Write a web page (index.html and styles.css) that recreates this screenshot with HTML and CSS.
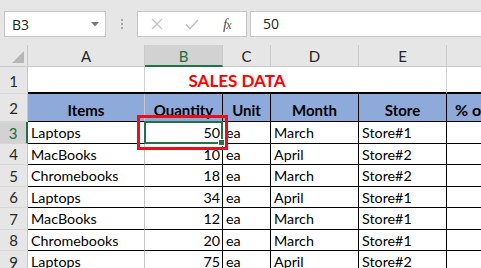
FILE: index.html
```html
<!DOCTYPE html>
<html>
<head>
<meta charset="utf-8">
<link rel="stylesheet" href="styles.css">
</head>
<body>
<div class="app">
  <div class="toolbar">
    <div class="namebox">
      <span class="nb-text">B3</span>
      <svg class="caret" width="8" height="5" viewBox="0 0 8 5"><path d="M0 0H8L4 4.5Z" fill="#7a7a7a"/></svg>
    </div>
    <div class="grip"><i></i><i></i><i></i></div>
    <div class="fbtns">
      <svg class="btn-x" width="12" height="12" viewBox="0 0 12 12"><path d="M1 1L11 11M11 1L1 11" stroke="#c3c3c3" stroke-width="1.4" fill="none"/></svg>
      <svg class="btn-ok" width="14" height="11" viewBox="0 0 14 11"><path d="M1 5.5L5 9.5L13 1" stroke="#c3c3c3" stroke-width="1.6" fill="none"/></svg>
      <span class="fx">f<span class="fx-x">x</span></span>
    </div>
    <div class="finput">50</div>
  </div>

  <div class="sheet">
    <div class="corner"><span class="tri"></span></div>
    <div class="ch">A</div>
    <div class="ch sel">B</div>
    <div class="ch">C</div>
    <div class="ch">D</div>
    <div class="ch">E</div>
    <div class="ch last"></div>

    <div class="rh">1</div>
    <div class="c r1 title-row">SALES DATA</div>
    <div class="c r1 f"></div>

    <div class="rh tall">2</div>
    <div class="c hd soft">Items</div>
    <div class="c hd">Quantity</div>
    <div class="c hd">Unit</div>
    <div class="c hd">Month</div>
    <div class="c hd">Store</div>
    <div class="c hd f clip">% of Total</div>

    <div class="rh rsel">3</div>
    <div class="c d soft">Laptops</div>
    <div class="c d num">50</div>
    <div class="c d">ea</div>
    <div class="c d">March</div>
    <div class="c d">Store#1</div>
    <div class="c d f"></div>

    <div class="rh">4</div>
    <div class="c d soft">MacBooks</div>
    <div class="c d num">10</div>
    <div class="c d">ea</div>
    <div class="c d">April</div>
    <div class="c d">Store#2</div>
    <div class="c d f"></div>

    <div class="rh">5</div>
    <div class="c d soft">Chromebooks</div>
    <div class="c d num">18</div>
    <div class="c d">ea</div>
    <div class="c d">March</div>
    <div class="c d">Store#2</div>
    <div class="c d f"></div>

    <div class="rh">6</div>
    <div class="c d soft">Laptops</div>
    <div class="c d num">34</div>
    <div class="c d">ea</div>
    <div class="c d">April</div>
    <div class="c d">Store#1</div>
    <div class="c d f"></div>

    <div class="rh">7</div>
    <div class="c d soft">MacBooks</div>
    <div class="c d num">12</div>
    <div class="c d">ea</div>
    <div class="c d">March</div>
    <div class="c d">Store#1</div>
    <div class="c d f"></div>

    <div class="rh">8</div>
    <div class="c d soft">Chromebooks</div>
    <div class="c d num">20</div>
    <div class="c d">ea</div>
    <div class="c d">March</div>
    <div class="c d">Store#1</div>
    <div class="c d f"></div>

    <div class="rh">9</div>
    <div class="c d soft">Laptops</div>
    <div class="c d num">75</div>
    <div class="c d">ea</div>
    <div class="c d">April</div>
    <div class="c d">Store#2</div>
    <div class="c d f"></div>

    <div class="selbox"><span class="handle"></span></div>
    <div class="redbox"></div>
  </div>
</div>
</body>
</html>
```

FILE: styles.css
```css
html, body {
  margin: 0;
  padding: 0;
  background: #ffffff;
}
.app {
  width: 481px;
  height: 268px;
  overflow: hidden;
  position: relative;
  font-family: "Lato", "Open Sans", sans-serif;
}

/* ---------- formula bar ---------- */
.toolbar {
  height: 45px;
  box-sizing: border-box;
  background: #e6e6e6;
  display: flex;
  align-items: flex-start;
  padding: 11px 0 0 4px;
}
.namebox {
  width: 102px;
  height: 26px;
  box-sizing: border-box;
  border: 1px solid #c6c6c6;
  background: #fff;
  display: flex;
  align-items: center;
  justify-content: space-between;
  padding: 0 6px 0 7px;
  font-family: "Open Sans", sans-serif;
  font-size: 14px;
  color: #222;
}
.caret { margin-top: 1px; }
.grip {
  width: 31px;
  height: 26px;
  display: flex;
  flex-direction: column;
  align-items: center;
  justify-content: center;
  gap: 2px;
}
.grip i {
  width: 2px;
  height: 2px;
  background: #a8a8a8;
}
.fbtns {
  width: 110px;
  height: 26px;
  box-sizing: border-box;
  border: 1px solid #c6c6c6;
  background: #fff;
  display: flex;
  align-items: center;
  padding-left: 13px;
}
.btn-x { margin-right: 22px; }
.btn-ok { margin-right: 24px; }
.fx {
  font-family: "Liberation Serif", serif;
  font-style: italic;
  font-size: 15px;
  color: #555;
  letter-spacing: -1px;
}
.fx-x { font-size: 12px; }
.finput {
  margin-left: 3px;
  flex: 1;
  height: 26px;
  box-sizing: border-box;
  border: 1px solid #c6c6c6;
  border-right: none;
  background: #fff;
  padding-left: 12px;
  font-family: "Open Sans", sans-serif;
  font-size: 14px;
  line-height: 24px;
  color: #222;
}

/* ---------- sheet grid ---------- */
.sheet {
  position: relative;
  display: grid;
  grid-template-columns: 28px 117px 78px 48px 88px 88px 60px;
  grid-template-rows: 22px 27px 28px repeat(7, 21.5px);
  font-size: 14.3px;
  color: #000;
}
.corner {
  background: #e6e6e6;
  border-right: 1px solid #c9c9c9;
  border-bottom: 1px solid #c9c9c9;
  box-sizing: border-box;
  position: relative;
}
.tri {
  position: absolute;
  right: 3px;
  bottom: 3px;
  width: 0;
  height: 0;
  border-left: 12px solid transparent;
  border-bottom: 12px solid #b7b7b7;
}
.ch {
  background: #e6e6e6;
  border-right: 1px solid #c9c9c9;
  border-bottom: 1px solid #c9c9c9;
  box-sizing: border-box;
  display: flex;
  align-items: center;
  justify-content: center;
  color: #262626;
  font-size: 15px;
  padding-top: 1px;
}
.ch.sel {
  background: #d2d2d2;
  color: #1e6b42;
  border-bottom: 2px solid #217346;
}
.ch.last { border-right: none; }
.rh {
  background: #e6e6e6;
  border-right: 1px solid #c9c9c9;
  border-bottom: 1px solid #d6d6d6;
  box-sizing: border-box;
  display: flex;
  align-items: center;
  justify-content: center;
  color: #262626;
  font-size: 15px;
  padding-top: 1px;
}
.rh.rsel {
  background: #d2d2d2;
  color: #1e6b42;
  border-right: 2px solid #217346;
}
.c {
  box-sizing: border-box;
  display: flex;
  align-items: center;
  padding: 1px 3px 0 3px;
  white-space: nowrap;
  overflow: hidden;
}
.r1 {
  border-bottom: 2px solid #000;
}
.title-row {
  grid-column: 2 / span 5;
  justify-content: center;
  color: #ff0000;
  font-weight: 700;
  font-size: 17px;
  border-right: 1px solid #d4d4d4;
  background:
    linear-gradient(#d4d4d4, #d4d4d4) 116px 0 / 1px 100% no-repeat;
  padding-right: 3px;
}
.hd {
  background: #8eaadb;
  font-weight: 700;
  font-size: 15px;
  justify-content: center;
  align-items: flex-end;
  padding-bottom: 2px;
  border-right: 1px solid #000;
  border-bottom: 1px solid #000;
}
.d {
  border-right: 1px solid #000;
  border-bottom: 1px solid #000;
}
.soft { border-right-color: #c6c6c6; }
.f { border-right: none; }
.clip { justify-content: flex-start; padding-left: 8px; font-size: 16px; }
.num { justify-content: flex-end; padding-right: 2px; }

/* ---------- overlays ---------- */
.selbox {
  position: absolute;
  left: 144px;
  top: 76px;
  width: 79px;
  height: 23px;
  box-sizing: border-box;
  border: 2px solid #217346;
}
.handle {
  position: absolute;
  right: -4px;
  bottom: -4px;
  width: 5px;
  height: 5px;
  background: #217346;
  border: 1px solid #fff;
}
.redbox {
  position: absolute;
  left: 137px;
  top: 70px;
  width: 91px;
  height: 35px;
  box-sizing: border-box;
  border: 3px solid #e8101e;
}
```
